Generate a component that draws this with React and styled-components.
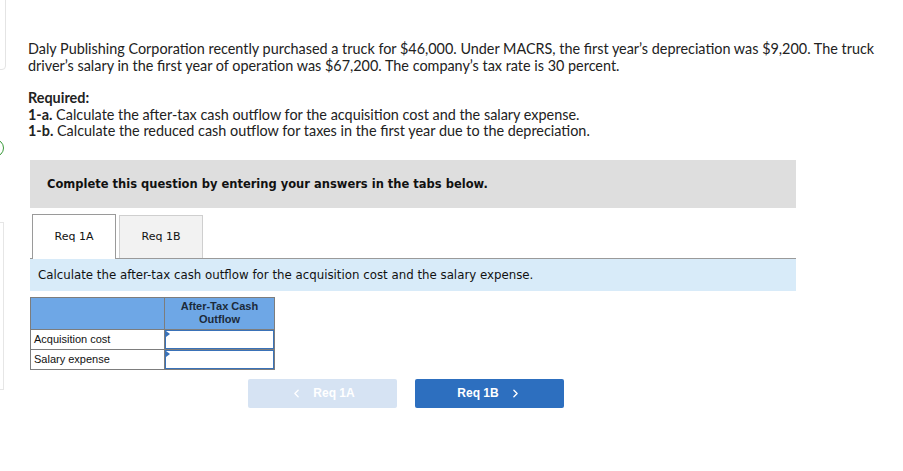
import React from "react";
import styled, { createGlobalStyle } from "styled-components";
import { ChevronLeft, ChevronRight } from "lucide-react";

const GlobalStyle = createGlobalStyle`
  body {
    margin: 0;
    background: #fff;
    font-family: "Lato", "Liberation Sans", sans-serif;
    color: #222;
  }
`;

const rows = ["Acquisition cost", "Salary expense"];

const App = () => {
  return (
    <Page>
      <GlobalStyle />
      <SideTop />
      <SideDot />
      <SideBottom />
      <Main>
        <Problem>
          Daly Publishing Corporation recently purchased a truck for $46,000. Under MACRS, the first
          year’s depreciation was $9,200. The truck driver’s salary in the first year of operation was
          $67,200. The company’s tax rate is 30 percent.
        </Problem>
        <Required>
          <Line>
            <strong>Required:</strong>
          </Line>
          <Line>
            <strong>1-a.</strong> Calculate the after-tax cash outflow for the acquisition cost and the
            salary expense.
          </Line>
          <Line>
            <strong>1-b.</strong> Calculate the reduced cash outflow for taxes in the first year due to
            the depreciation.
          </Line>
        </Required>

        <Panel>
          <Notice>Complete this question by entering your answers in the tabs below.</Notice>
          <Tabs>
            <Tab $active>Req 1A</Tab>
            <Tab>Req 1B</Tab>
          </Tabs>
          <Instruction>
            Calculate the after-tax cash outflow for the acquisition cost and the salary expense.
          </Instruction>

          <Table>
            <thead>
              <tr>
                <HeadCell $wide />
                <HeadCell>
                  After-Tax Cash
                  <br />
                  Outflow
                </HeadCell>
              </tr>
            </thead>
            <tbody>
              {rows.map((label) => (
                <tr key={label}>
                  <LabelCell>{label}</LabelCell>
                  <InputCell>
                    <Field />
                  </InputCell>
                </tr>
              ))}
            </tbody>
          </Table>

          <Nav>
            <NavButton disabled>
              <ChevronLeft size={13} strokeWidth={2.5} />
              Req 1A
            </NavButton>
            <NavButton $primary>
              Req 1B
              <ChevronRight size={13} strokeWidth={2.5} />
            </NavButton>
          </Nav>
        </Panel>
      </Main>
    </Page>
  );
};

const Page = styled.div`
  position: relative;
  min-height: 471px;
`;

const SideTop = styled.div`
  position: absolute;
  left: -10px;
  top: -2px;
  width: 14px;
  height: 70px;
  border: 1px solid #e4e4e4;
  border-radius: 0 0 4px 0;
`;

const SideDot = styled.div`
  position: absolute;
  left: -14px;
  top: 139px;
  width: 16px;
  height: 16px;
  border: 1px solid #3a9a3a;
  border-radius: 50%;
`;

const SideBottom = styled.div`
  position: absolute;
  left: -10px;
  top: 222px;
  width: 12px;
  height: 166px;
  border: 1px solid #e6e6e6;
`;

const Main = styled.div`
  padding: 40px 0 0 28px;
`;

const Problem = styled.p`
  margin: 0;
  width: 860px;
  font-size: 14.4px;
  line-height: 17px;
`;

const Required = styled.div`
  margin-top: 16px;
  font-size: 14.4px;

  strong {
    font-weight: 700;
  }
`;

const Line = styled.div`
  height: 16.5px;
  line-height: 16.5px;
  white-space: nowrap;
`;

const Panel = styled.div`
  width: 766px;
  margin: 20px 0 0 2px;
`;

const Notice = styled.div`
  height: 48px;
  background: #dedede;
  display: flex;
  align-items: center;
  padding-left: 17px;
  font-family: "DejaVu Sans", Verdana, sans-serif;
  font-weight: 700;
  font-size: 11.5px;
  color: #111;
`;

const Tabs = styled.div`
  display: flex;
  align-items: flex-end;
  gap: 3px;
  margin-top: 6px;
  padding-left: 2px;
  border-bottom: 1px solid #9a9a9a;
`;

const Tab = styled.div`
  width: 82px;
  display: flex;
  align-items: center;
  justify-content: center;
  font-family: "DejaVu Sans", Verdana, sans-serif;
  font-size: 11px;
  color: #111;
  background: ${(p) => (p.$active ? "#fff" : "#f2f2f2")};
  border: 1px solid ${(p) => (p.$active ? "#9a9a9a" : "#cfcfcf")};
  border-bottom: none;
  margin-bottom: ${(p) => (p.$active ? "-1px" : "0")};
  height: ${(p) => (p.$active ? "44px" : "42px")};
`;

const Instruction = styled.div`
  height: 32px;
  display: flex;
  align-items: center;
  padding-left: 8px;
  background: #d8ebf9;
  font-family: "DejaVu Sans", Verdana, sans-serif;
  font-size: 11.8px;
  color: #111;
`;

const Table = styled.table`
  margin-top: 6px;
  border-collapse: collapse;
  font-family: "Liberation Sans", Arial, sans-serif;
  font-size: 11px;
`;

const HeadCell = styled.th`
  width: ${(p) => (p.$wide ? "133px" : "109px")};
  height: 31px;
  background: #6ea7e6;
  border: 1px solid #7d7d7d;
  font-weight: 700;
  color: #1c2a3a;
  line-height: 13px;
  padding: 0;
  vertical-align: middle;
`;

const LabelCell = styled.td`
  height: 19px;
  padding: 0 3px;
  border: 1px solid #7d7d7d;
  color: #111;
`;

const InputCell = styled.td`
  padding: 0;
  border: 1px solid #7d7d7d;
  height: 19px;
`;

const Field = styled.div`
  position: relative;
  height: 17px;
  border: 1px solid #3a72b8;
  background: #fff;

  &::before {
    content: "";
    position: absolute;
    left: 0;
    top: 0;
    border-top: 3px solid transparent;
    border-bottom: 3px solid transparent;
    border-left: 4px solid #3a72b8;
  }
`;

const Nav = styled.div`
  display: flex;
  gap: 18px;
  margin: 9px 0 0 218px;
`;

const NavButton = styled.button`
  width: 149px;
  height: 29px;
  border: none;
  border-radius: 2px;
  background: ${(p) => (p.$primary ? "#2d6fbf" : "#d6e3f3")};
  color: #fff;
  font-family: "Liberation Sans", Arial, sans-serif;
  font-weight: 700;
  font-size: 12px;
  display: flex;
  align-items: center;
  justify-content: center;
  gap: 10px;
  padding: 0;
`;

export default App;
